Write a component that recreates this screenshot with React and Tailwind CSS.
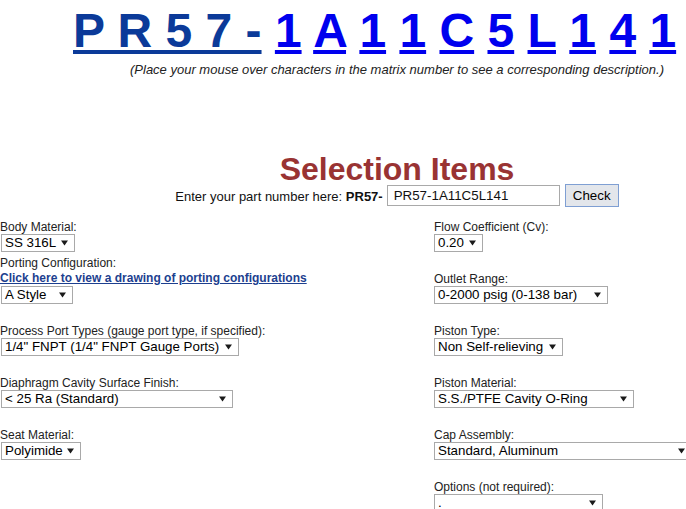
import React from "react";

const Arrow = () => (
  <svg width="7" height="6" viewBox="0 0 7 6" className="shrink-0">
    <path d="M0 0.5 L7 0.5 L3.5 5.5 Z" fill="#1a1a1a" />
  </svg>
);

const Select = ({ className, children }) => (
  <div
    className={
      "flex h-[18px] items-center justify-between border border-[#a9a9a9] bg-white pl-[3px] pr-[6px] text-[13.33px] leading-[16px] text-black whitespace-nowrap overflow-hidden " +
      className
    }
  >
    <span>{children}</span>
    <Arrow />
  </div>
);

const Label = ({ children }) => (
  <div className="text-[12px] leading-[14px] text-[#222] whitespace-nowrap">{children}</div>
);

const Cell = ({ children }) => (
  <div className="flex flex-col items-start justify-end">{children}</div>
);

export default function App() {
  const chars = ["1", "A", "1", "1", "C", "5", "L", "1", "4", "1"];
  return (
    <div className="relative h-[509px] w-[686px] overflow-hidden bg-white font-['Liberation_Sans',Arial,sans-serif] text-black">
      <div className="w-[794px]">
        <div className="pt-[3px] pl-[73px] whitespace-nowrap text-[48px] font-bold leading-[56px] h-[59px]">
          <span className="text-[#0b3a99] underline">P R 5 7 -</span>
          {chars.map((c, i) => (
            <React.Fragment key={i}>
              {" "}
              <a href="#" className="text-[#0000ee] underline">
                {c}
              </a>
            </React.Fragment>
          ))}
        </div>
        <div className="mt-[3px] pl-[130px] text-[13px] italic leading-[15px] text-[#222] whitespace-nowrap">
          (Place your mouse over characters in the matrix number to see a corresponding description.)
        </div>
        <div className="mt-[79px] h-[28px] text-center text-[32px] font-bold leading-[26px] text-[#993333]">
          Selection Items
        </div>
        <div className="flex h-[23px] items-center justify-center text-[13px] text-[#111]">
          <span className="mt-[2px] whitespace-nowrap leading-[15px]">
            Enter your part number here: <b>PR57-</b>
          </span>
          <div className="ml-[4px] flex h-[21px] w-[173px] items-center border border-[#a9a9a9] pl-[6px] text-[13.33px] leading-[15px]">
            PR57-1A11C5L141
          </div>
          <button className="ml-[5px] flex h-[23px] w-[54px] items-center justify-center border border-[#7f9fd3] bg-[#e3e6eb] text-[13.33px] text-black">
            Check
          </button>
        </div>

        <div className="mt-[13px] grid grid-cols-[434px_360px] grid-rows-[32px_52px_52px_52px_52px_52px]">
          <Cell>
            <Label>Body Material:</Label>
            <Select className="ml-[1px] w-[74px]">SS 316L</Select>
          </Cell>
          <Cell>
            <Label>Flow Coefficient (Cv):</Label>
            <Select className="w-[49px]">0.20</Select>
          </Cell>

          <Cell>
            <Label>Porting Configuration:</Label>
            <a href="#" className="text-[12px] font-bold leading-[16px] text-[#1d3f8f] underline whitespace-nowrap">
              Click here to view a drawing of porting configurations
            </a>
            <Select className="ml-[1px] w-[72px]">A Style</Select>
          </Cell>
          <Cell>
            <Label>Outlet Range:</Label>
            <Select className="w-[174px]">0-2000 psig (0-138 bar)</Select>
          </Cell>

          <Cell>
            <Label>Process Port Types (gauge port type, if specified):</Label>
            <Select className="ml-[1px] w-[238px]">1/4" FNPT (1/4" FNPT Gauge Ports)</Select>
          </Cell>
          <Cell>
            <Label>Piston Type:</Label>
            <Select className="w-[129px]">Non Self-relieving</Select>
          </Cell>

          <Cell>
            <Label>Diaphragm Cavity Surface Finish:</Label>
            <Select className="ml-[1px] w-[232px]">&lt; 25 Ra (Standard)</Select>
          </Cell>
          <Cell>
            <Label>Piston Material:</Label>
            <Select className="w-[200px]">S.S./PTFE Cavity O-Ring</Select>
          </Cell>

          <Cell>
            <Label>Seat Material:</Label>
            <Select className="ml-[1px] w-[80px]">Polyimide</Select>
          </Cell>
          <Cell>
            <Label>Cap Assembly:</Label>
            <Select className="w-[258px]">Standard, Aluminum</Select>
          </Cell>

          <Cell />
          <Cell>
            <Label>Options (not required):</Label>
            <Select className="w-[169px]">.</Select>
          </Cell>
        </div>
      </div>
    </div>
  );
}
